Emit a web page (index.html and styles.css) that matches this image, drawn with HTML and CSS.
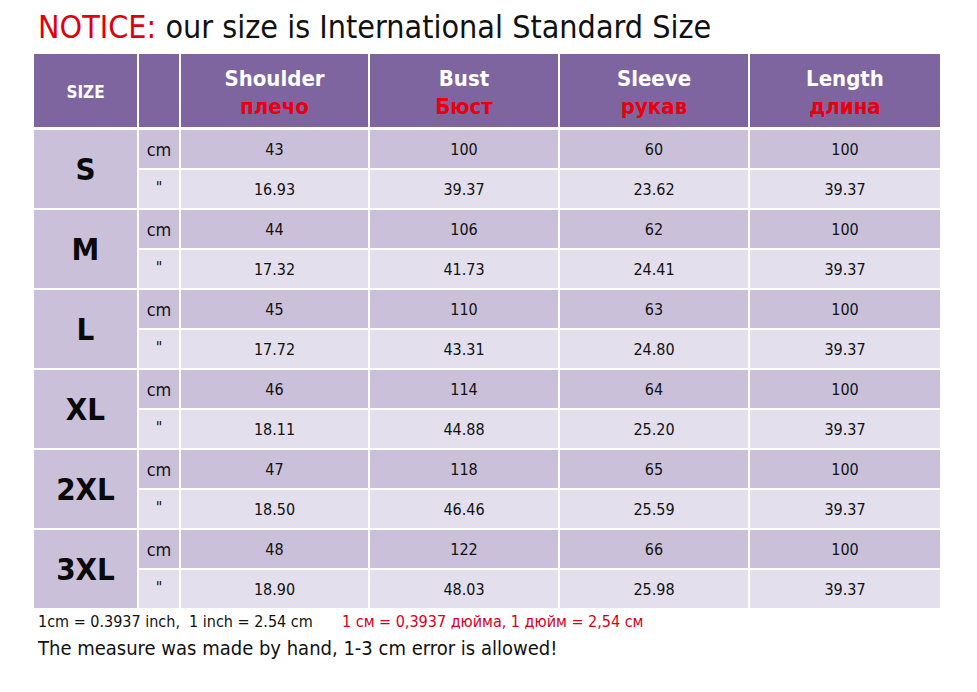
FILE: index.html
```html
<!DOCTYPE html>
<html>
<head>
<meta charset="utf-8">
<link rel="stylesheet" href="styles.css">
</head>
<body>
<h1 class="title"><span class="red">NOTICE:</span> our size is International Standard Size</h1>
<div class="chart">
  <div class="hd hd-size">SIZE</div>
  <div class="hd"></div>
  <div class="hd hd-col"><span>Shoulder</span><span class="ru">плечо</span></div>
  <div class="hd hd-col"><span>Bust</span><span class="ru">Бюст</span></div>
  <div class="hd hd-col"><span>Sleeve</span><span class="ru">рукав</span></div>
  <div class="hd hd-col"><span>Length</span><span class="ru">длина</span></div>

  <div class="sz">S</div>
  <div class="unit dark">cm</div><div class="v dark">43</div><div class="v dark">100</div><div class="v dark">60</div><div class="v dark">100</div>
  <div class="unit light q">"</div><div class="v light">16.93</div><div class="v light">39.37</div><div class="v light">23.62</div><div class="v light">39.37</div>

  <div class="sz">M</div>
  <div class="unit dark">cm</div><div class="v dark">44</div><div class="v dark">106</div><div class="v dark">62</div><div class="v dark">100</div>
  <div class="unit light q">"</div><div class="v light">17.32</div><div class="v light">41.73</div><div class="v light">24.41</div><div class="v light">39.37</div>

  <div class="sz">L</div>
  <div class="unit dark">cm</div><div class="v dark">45</div><div class="v dark">110</div><div class="v dark">63</div><div class="v dark">100</div>
  <div class="unit light q">"</div><div class="v light">17.72</div><div class="v light">43.31</div><div class="v light">24.80</div><div class="v light">39.37</div>

  <div class="sz">XL</div>
  <div class="unit dark">cm</div><div class="v dark">46</div><div class="v dark">114</div><div class="v dark">64</div><div class="v dark">100</div>
  <div class="unit light q">"</div><div class="v light">18.11</div><div class="v light">44.88</div><div class="v light">25.20</div><div class="v light">39.37</div>

  <div class="sz">2XL</div>
  <div class="unit dark">cm</div><div class="v dark">47</div><div class="v dark">118</div><div class="v dark">65</div><div class="v dark">100</div>
  <div class="unit light q">"</div><div class="v light">18.50</div><div class="v light">46.46</div><div class="v light">25.59</div><div class="v light">39.37</div>

  <div class="sz">3XL</div>
  <div class="unit dark">cm</div><div class="v dark">48</div><div class="v dark">122</div><div class="v dark">66</div><div class="v dark">100</div>
  <div class="unit light q">"</div><div class="v light">18.90</div><div class="v light">48.03</div><div class="v light">25.98</div><div class="v light">39.37</div>
</div>
<p class="conv"><span class="en">1cm = 0.3937 inch,&nbsp; 1 inch = 2.54 cm</span><span class="red2">1 см = 0,3937 дюйма, 1 дюйм = 2,54 см</span></p>
<p class="note">The measure was made by hand, 1-3 cm error is allowed!</p>
</body>
</html>
```
FILE: styles.css
```css
html, body {
  margin: 0;
  padding: 0;
  background: #ffffff;
}
body {
  width: 977px;
  height: 692px;
  overflow: hidden;
  font-family: "DejaVu Sans Condensed", "DejaVu Sans", sans-serif;
  color: #111;
}
.title {
  margin: 9px 0 0 38px;
  font-weight: normal;
  font-size: 32px;
  line-height: 36px;
  height: 45px;
  color: #111;
  white-space: nowrap;
}
.red { color: #e0000d; }
.chart {
  margin-left: 34px;
  width: 906px;
  display: grid;
  grid-template-columns: 103px 40px 187px 188px 188px 190px;
  grid-template-rows: 74px repeat(12, 38px);
  column-gap: 2px;
  row-gap: 2px;
  background: #ffffff;
}
.hd {
  background: #7e65a0;
  color: #fff;
  font-weight: bold;
  margin-bottom: 1px;
}
.hd-size {
  display: flex;
  align-items: center;
  justify-content: center;
  font-size: 17px;
  padding-top: 2px;
}
.hd-col {
  display: flex;
  flex-direction: column;
  align-items: center;
  justify-content: center;
  font-size: 22px;
  line-height: 28px;
  padding-top: 4px;
}
.hd-col .ru { color: #e8000f; }
.sz {
  grid-column: 1;
  grid-row: span 2;
  background: #cbc0da;
  display: flex;
  align-items: center;
  justify-content: center;
  font-weight: bold;
  font-size: 31px;
  color: #0a0a0a;
}
.unit {
  grid-column: 2;
  display: flex;
  align-items: center;
  justify-content: center;
  font-size: 18px;
}
.unit.q { font-size: 16px; padding-bottom: 4px; }
.v {
  display: flex;
  align-items: center;
  justify-content: center;
  font-size: 16px;
}
.dark { background: #cbc0da; }
.light { background: #e3dfec; }
.conv {
  margin: 4px 0 0 38px;
  font-size: 16px;
  line-height: 20px;
  white-space: nowrap;
}
.conv .en { display: inline-block; width: 304px; }
.red2 { color: #d6001a; }
.note {
  margin: 4px 0 0 38px;
  font-size: 20px;
  line-height: 24px;
  white-space: nowrap;
}
```
